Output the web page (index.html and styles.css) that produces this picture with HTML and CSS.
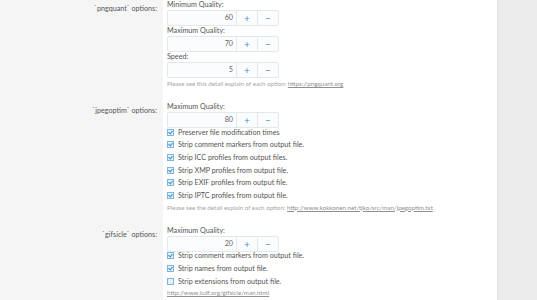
FILE: index.html
```html
<!DOCTYPE html>
<html lang="en">
<head>
  <meta charset="UTF-8">
  <title>Image optimizer options</title>
  <link rel="stylesheet" href="styles.css">
</head>
<body>
  <div class="page">
    <div class="options">

      <div class="row">
        <div class="row-label">`pngquant` options:</div>
        <div class="row-body">
          <div class="field-label">Minimum Quality:</div>
          <div class="spinner"><span class="spinner-value">60</span><span class="spinner-btn">+</span><span class="spinner-btn">&minus;</span></div>
          <div class="field-label">Maximum Quality:</div>
          <div class="spinner"><span class="spinner-value">70</span><span class="spinner-btn">+</span><span class="spinner-btn">&minus;</span></div>
          <div class="field-label">Speed:</div>
          <div class="spinner"><span class="spinner-value">5</span><span class="spinner-btn">+</span><span class="spinner-btn">&minus;</span></div>
          <div class="hint">Please see this detail explain of each option: <a href="#">https://pngquant.org</a></div>
        </div>
      </div>

      <div class="row">
        <div class="row-label">`jpegoptim` options:</div>
        <div class="row-body">
          <div class="field-label">Maximum Quality:</div>
          <div class="spinner"><span class="spinner-value">80</span><span class="spinner-btn">+</span><span class="spinner-btn">&minus;</span></div>
          <ul class="checks">
            <li><span class="check on"></span>Preserver file modification times</li>
            <li><span class="check on"></span>Strip comment markers from output file.</li>
            <li><span class="check on"></span>Strip ICC profiles from output files.</li>
            <li><span class="check on"></span>Strip XMP profiles from output file.</li>
            <li><span class="check on"></span>Strip EXIF profiles from output file.</li>
            <li><span class="check on"></span>Strip IPTC profiles from output file.</li>
          </ul>
          <div class="hint">Please see the detail explain of each option: <a href="#">http://www.kokkonen.net/tjko/src/man/jpegoptim.txt</a></div>
        </div>
      </div>

      <div class="row">
        <div class="row-label">`gifsicle` options:</div>
        <div class="row-body">
          <div class="field-label">Maximum Quality:</div>
          <div class="spinner"><span class="spinner-value">20</span><span class="spinner-btn">+</span><span class="spinner-btn">&minus;</span></div>
          <ul class="checks">
            <li><span class="check on"></span>Strip comment markers from output file.</li>
            <li><span class="check on"></span>Strip names from output file.</li>
            <li><span class="check"></span>Strip extensions from output file.</li>
          </ul>
          <div class="hint"><a href="#">http://www.lcdf.org/gifsicle/man.html</a></div>
        </div>
      </div>

    </div>
    <div class="sidebar"></div>
  </div>
</body>
</html>
```

FILE: styles.css
```css
body {
  margin: 0;
  font-family: Lato, 'Liberation Sans', sans-serif;
  font-size: 7.2px;
  color: #555;
  background-color: #f5f5f5;
}

.page {
  display: flex;
  height: 300px;
  overflow: hidden;
}

.options {
  width: 497px;
  background: linear-gradient(to right, #f5f5f5 163px, #fff 163px);
}

.sidebar {
  flex: 1;
  border-left: 1px solid #e2e2e2;
  background-color: #ebebeb;
}

.row {
  display: grid;
  grid-template-columns: 163px 1fr;
  padding-bottom: 13px;
}

.row-label {
  text-align: right;
  padding-right: 6px;
  padding-top: 4px;
  line-height: 10px;
}

.row-body {
  padding-left: 4px;
}

.field-label {
  line-height: 10px;
}

.spinner {
  display: flex;
  width: 110px;
  height: 14px;
  border: 1px solid #e3e8ec;
  border-radius: 2px;
  background-color: #fbfcfd;
}

.spinner-value {
  flex: 1;
  text-align: right;
  padding-right: 3px;
  line-height: 14px;
  color: #666;
}

.spinner-btn {
  width: 20px;
  border-left: 1px solid #e3e8ec;
  text-align: center;
  line-height: 14px;
  font-size: 10px;
  color: #3d8fd1;
}

.checks {
  list-style: none;
  margin: -2px 0 0;
  padding: 0;
}

.checks li {
  display: flex;
  align-items: center;
  height: 12.6px;
}

.check {
  width: 5px;
  height: 5px;
  margin-right: 4px;
  border: 1px solid #7db6e0;
  background-color: #e4f1fa;
  position: relative;
}

.check.on::after {
  content: "";
  position: absolute;
  left: 1px;
  top: 0;
  width: 2px;
  height: 3px;
  border: solid #3d8fd1;
  border-width: 0 1px 1px 0;
  transform: rotate(40deg);
}

.hint {
  font-size: 6.2px;
  color: #a5a5a5;
  line-height: 11px;
}

.hint a {
  color: #8f8f8f;
}
```
